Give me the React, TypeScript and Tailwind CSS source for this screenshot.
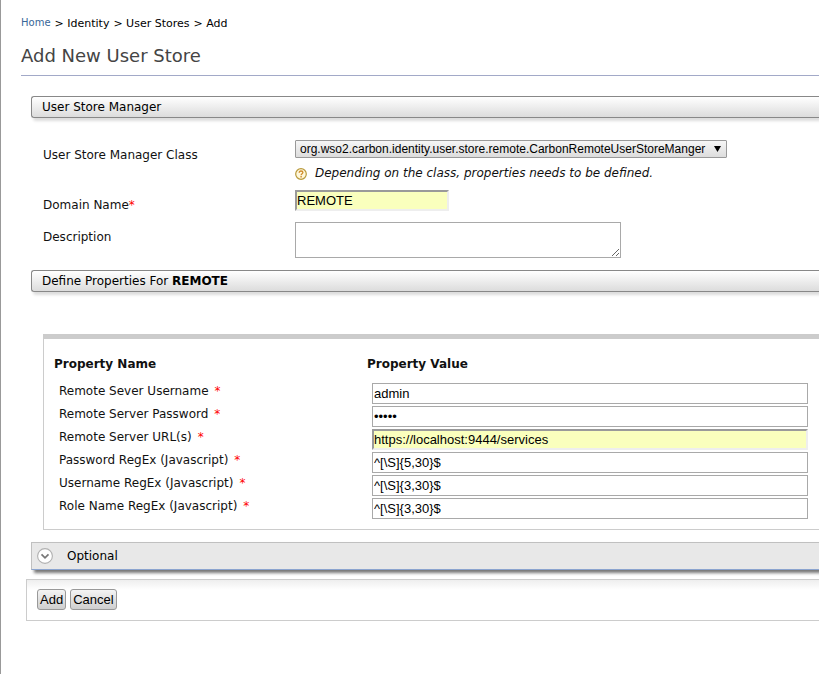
import { useState } from "react";
import type { ReactNode } from "react";

type Property = {
  id: string;
  label: string;
  value: string;
  type?: "text" | "password";
  autofilled?: boolean;
};

const properties: Property[] = [
  { id: "username", label: "Remote Sever Username", value: "admin" },
  { id: "password", label: "Remote Server Password", value: "admin", type: "password" },
  { id: "urls", label: "Remote Server URL(s)", value: "https://localhost:9444/services", autofilled: true },
  { id: "password-regex", label: "Password RegEx (Javascript)", value: "^[\\S]{5,30}$" },
  { id: "username-regex", label: "Username RegEx (Javascript)", value: "^[\\S]{3,30}$" },
  { id: "role-regex", label: "Role Name RegEx (Javascript)", value: "^[\\S]{3,30}$" },
];

const plainField = "border border-[#a9a9a9] bg-white px-px";
const filledField =
  "border-2 border-t-[#9a9a9a] border-l-[#9a9a9a] border-r-[#eeeeee] border-b-[#eeeeee] bg-[#faffbd]";
const fieldFont = "font-['Liberation_Sans',Arial,sans-serif] text-[13px] leading-4 text-black outline-none";
const buttonStyle =
  "h-[21px] rounded-[3px] border border-[#999999] bg-linear-to-b from-[#f4f4f4] to-[#cfcfcf] px-[2px] font-['Liberation_Sans',Arial,sans-serif] text-[13px] leading-4 text-black";

function SectionBar({ children }: { children: ReactNode }) {
  return (
    <h3 className="h-[22px] rounded-l-[3px] border border-r-0 border-[#888888] bg-linear-to-b from-white to-[#dcdcdc] pl-[10px] leading-5 text-black shadow-[2px_3px_3px_#dddddd]">
      {children}
    </h3>
  );
}

function Required() {
  return <span className="text-[#ff0000]">*</span>;
}

function HelpIcon() {
  return (
    <svg width="12" height="12" viewBox="0 0 12 12" fill="none" aria-hidden="true">
      <circle cx="6" cy="6" r="5.3" fill="#fff8dc" stroke="#b99a3c" strokeWidth="1.2" />
      <path d="M4.200 4.700C4.200 3.500 5 3 6 3s1.900.6 1.900 1.600C7.900 5.700 6.100 5.800 6.100 7.200" stroke="#d08a2a" strokeWidth="1.3" />
      <path d="M5.400 8.100h1.400v1.300H5.400z" fill="#d08a2a" />
    </svg>
  );
}

function ExpandIcon() {
  return (
    <svg width="16" height="16" viewBox="0 0 16 16" fill="none" aria-hidden="true">
      <circle cx="8" cy="8" r="7.400" fill="#ffffff" stroke="#b0b0b0" strokeWidth="1.100" />
      <path d="M4.500 6.300 8 9.800l3.500-3.500" stroke="#777777" strokeWidth="1.700" />
    </svg>
  );
}

export default function App() {
  const [storeClass, setStoreClass] = useState("org.wso2.carbon.identity.user.store.remote.CarbonRemoteUserStoreManger");

  return (
    <div className="min-h-screen overflow-x-hidden border-l border-[#999999] bg-white pl-5 font-['DejaVu_Sans',Verdana,sans-serif] text-[12px] leading-4 text-[#111111]">
      <nav aria-label="Breadcrumb" className="flex gap-1 pt-4 text-[11px] text-black">
        <a href="#home" className="text-[10px] leading-[14px] text-[#386698]">
          Home
        </a>
        <span>&gt; Identity</span>
        <span>&gt; User Stores</span>
        <span>&gt; Add</span>
      </nav>

      <h2 className="mt-[11px] h-[33px] border-b border-[#a2a9c8] pt-px text-[18px] leading-6 text-[#444444]">
        Add New User Store
      </h2>

      <form onSubmit={(event) => event.preventDefault()}>
        <div className="mt-5 pl-[10px]">
          <SectionBar>User Store Manager</SectionBar>

          <div className="mt-[22px] grid grid-cols-[252px_1fr] items-start pl-3">
            <label htmlFor="store-class" className="pt-[7px]">
              User Store Manager Class
            </label>
            <div className="h-[50px]">
              <div className="relative w-[432px]">
                <select
                  id="store-class"
                  value={storeClass}
                  onChange={(event) => setStoreClass(event.target.value)}
                  className="block h-[18px] w-full appearance-none rounded-[1px] border border-[#999999] bg-linear-to-b from-[#f6f6f6] to-[#dddddd] pl-1 font-['Liberation_Sans',Arial,sans-serif] text-[12px] leading-4 text-black"
                >
                  <option>org.wso2.carbon.identity.user.store.remote.CarbonRemoteUserStoreManger</option>
                </select>
                <svg className="pointer-events-none absolute top-[6px] right-[6px]" width="7" height="6" viewBox="0 0 7 6" aria-hidden="true">
                  <path d="M0 0h7L3.500 6z" fill="#000000" />
                </svg>
              </div>
              <p className="mt-[7px] flex gap-2 italic">
                <span className="pt-[3px]">
                  <HelpIcon />
                </span>
                Depending on the class, properties needs to be defined.
              </p>
            </div>

            <label htmlFor="domain" className="pt-[7px]">
              Domain Name
              <Required />
            </label>
            <div className="h-8">
              <input id="domain" defaultValue="REMOTE" className={`block h-[21px] w-[154px] ${fieldFont} ${filledField}`} />
            </div>

            <label htmlFor="description" className="pt-[7px]">
              Description
            </label>
            <textarea id="description" className={`block h-9 w-[326px] resize ${fieldFont} ${plainField}`} />
          </div>

          <div className="mt-3">
            <SectionBar>
              Define Properties For <b>REMOTE</b>
            </SectionBar>
          </div>

          <div className="mt-[42px] ml-3 border border-t-[5px] border-r-0 border-[#cccccc] pt-[17px] pb-2">
            <table className="w-full table-fixed">
              <thead>
                <tr className="text-left align-top">
                  <th className="h-[27px] w-[323px] pl-[10px] font-bold">Property Name</th>
                  <th className="font-bold">Property Value</th>
                </tr>
              </thead>
              <tbody>
                {properties.map((property) => (
                  <tr key={property.id} className="h-[23px] align-top">
                    <td className="pl-[15px]">
                      <label htmlFor={property.id} className="flex gap-1.5">
                        {property.label}
                        <Required />
                      </label>
                    </td>
                    <td className="pr-[11px] pl-[5px]">
                      <input
                        id={property.id}
                        type={property.type ?? "text"}
                        defaultValue={property.value}
                        className={`block h-[21px] w-full ${fieldFont} ${property.autofilled ? filledField : plainField}`}
                      />
                    </td>
                  </tr>
                ))}
              </tbody>
            </table>
          </div>

          <button
            type="button"
            aria-expanded="false"
            className="mt-3 flex h-[28px] w-full items-center gap-[14px] border border-r-0 border-[#c0c0c0] border-b-[#8ba4cf] bg-[#e8e8e8] pl-[5px] text-left text-black shadow-[3px_3px_3px_#777777]"
          >
            <ExpandIcon />
            Optional
          </button>
        </div>

        <div className="mt-[9px] ml-[5px] flex h-[42px] gap-1 border border-r-0 border-[#cccccc] bg-linear-to-b from-[#eeeeee] to-white to-25% pt-[9px] pl-[10px]">
          <button type="submit" className={buttonStyle}>
            Add
          </button>
          <button type="button" className={buttonStyle}>
            Cancel
          </button>
        </div>
      </form>
    </div>
  );
}
